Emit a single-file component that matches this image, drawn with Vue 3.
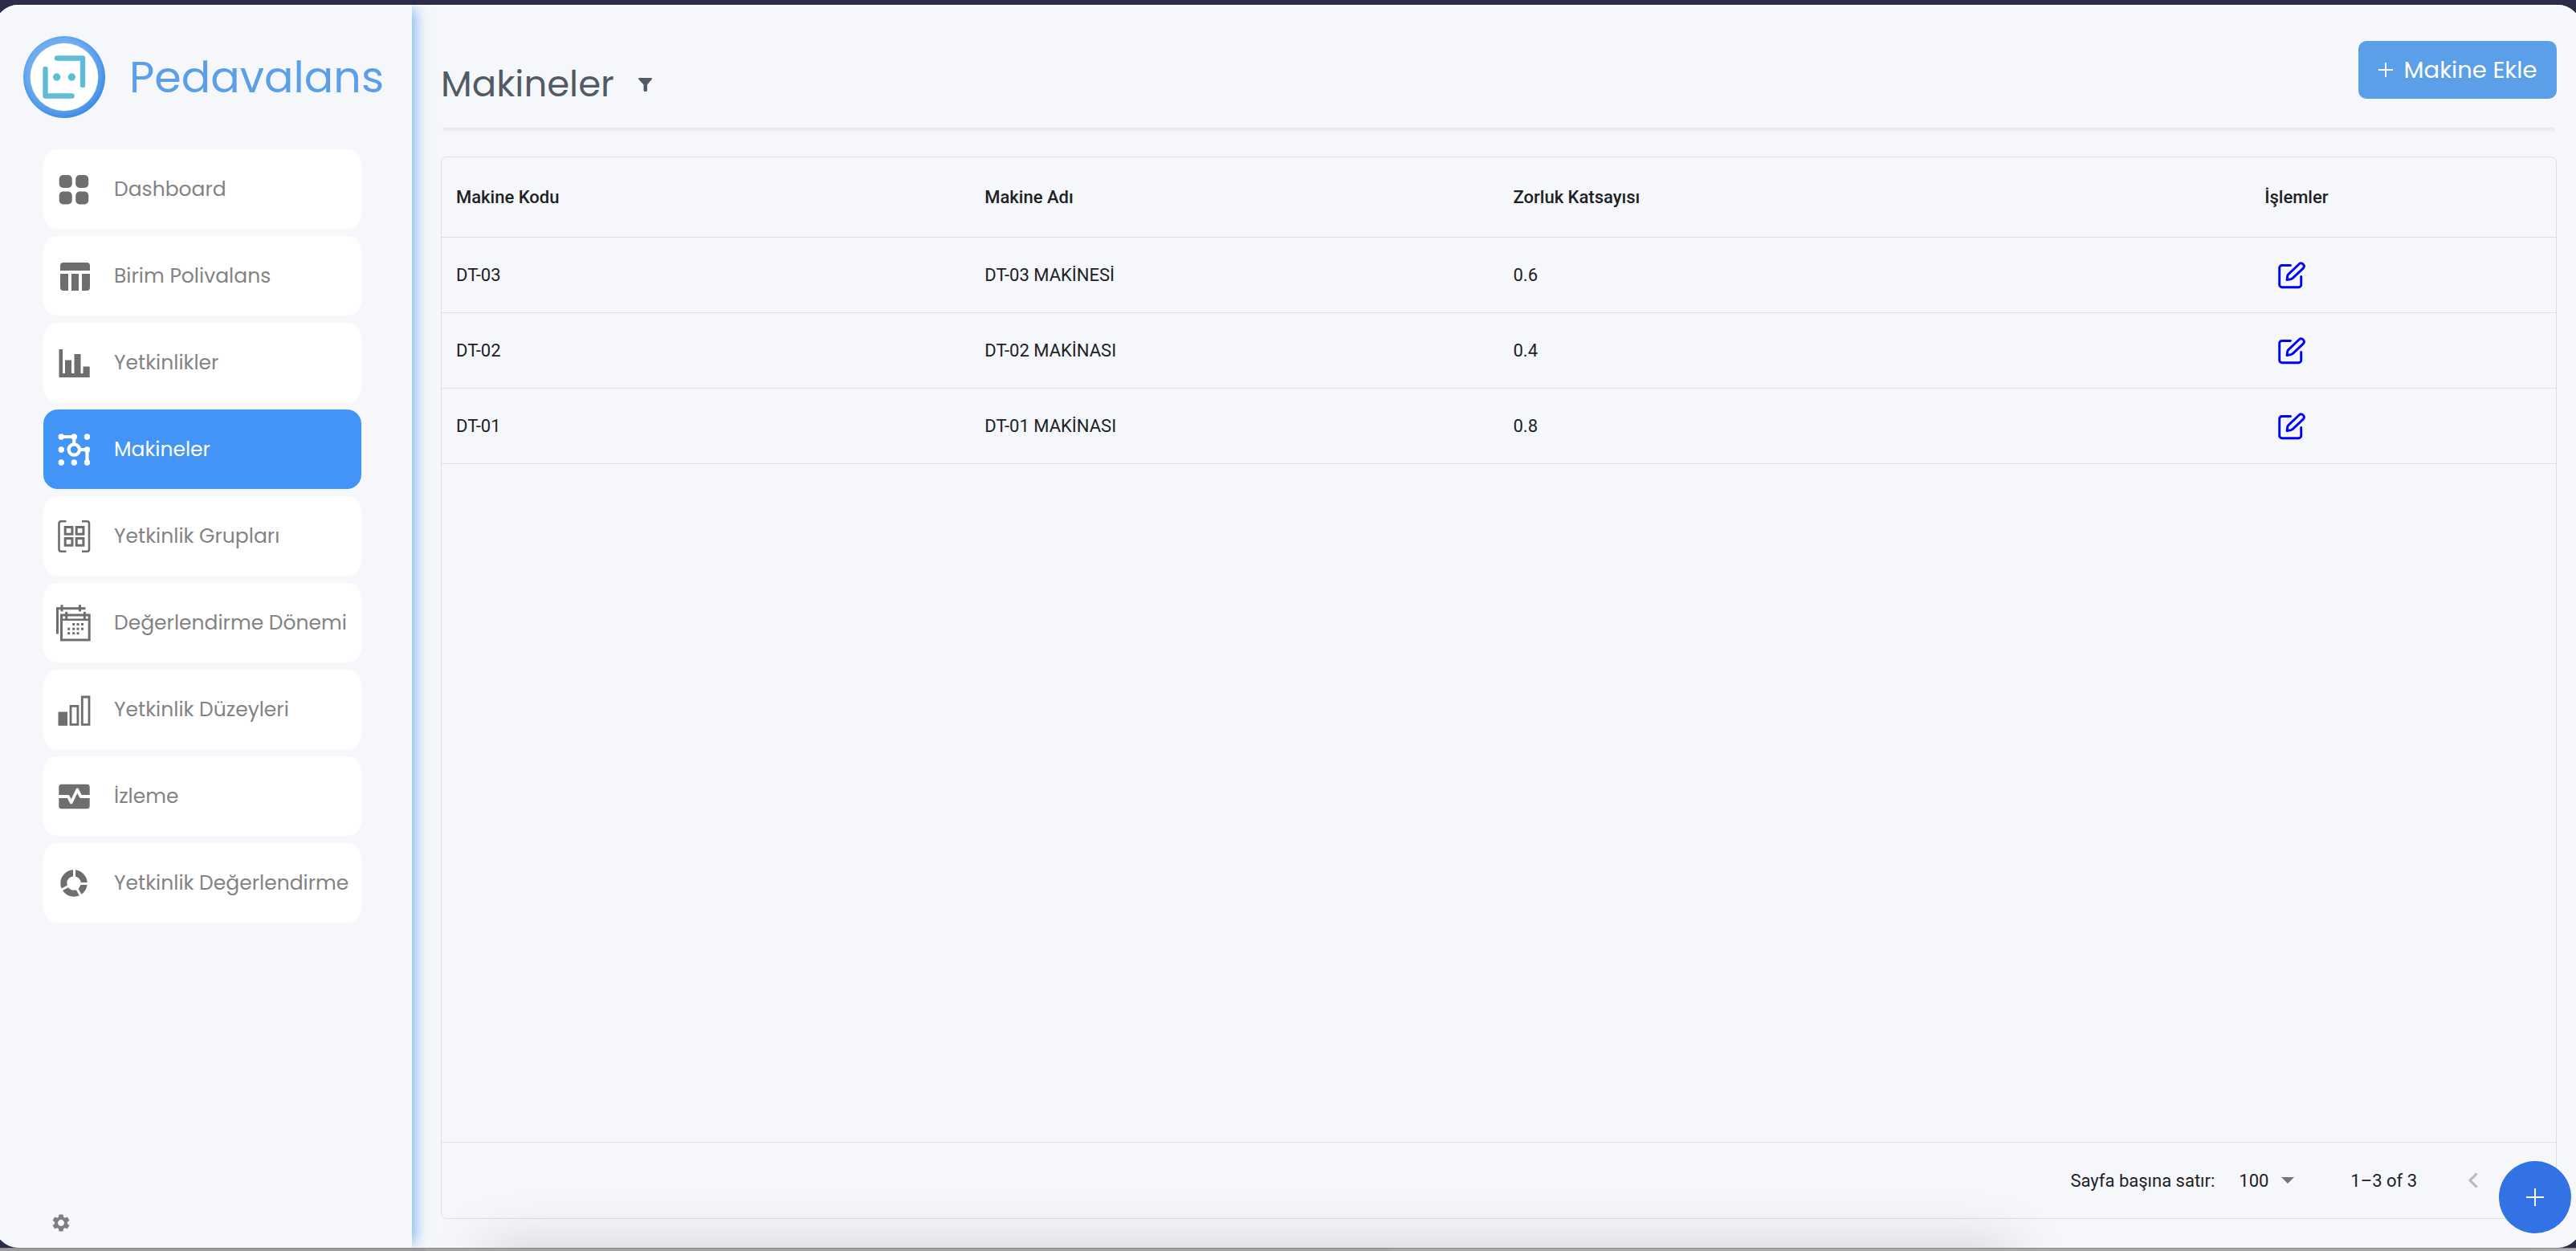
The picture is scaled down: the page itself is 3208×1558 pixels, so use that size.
<script setup>
import { ref } from 'vue'

const menu = [
  { id: 'dashboard', label: 'Dashboard' },
  { id: 'table', label: 'Birim Polivalans' },
  { id: 'chart', label: 'Yetkinlikler' },
  { id: 'machines', label: 'Makineler' },
  { id: 'groups', label: 'Yetkinlik Grupları' },
  { id: 'calendar', label: 'Değerlendirme Dönemi' },
  { id: 'levels', label: 'Yetkinlik Düzeyleri' },
  { id: 'monitor', label: 'İzleme' },
  { id: 'donut', label: 'Yetkinlik Değerlendirme' },
]
const active = ref('machines')

const rows = [
  { code: 'DT-03', name: 'DT-03 MAKİNESİ', factor: '0.6' },
  { code: 'DT-02', name: 'DT-02 MAKİNASI', factor: '0.4' },
  { code: 'DT-01', name: 'DT-01 MAKİNASI', factor: '0.8' },
]
const pageSize = ref(100)
</script>

<template>
  <div class="page">
    <div class="shell">
      <aside class="sidebar">
        <a class="brand" href="#">
          <svg class="logo" viewBox="0 0 102 102" aria-hidden="true">
            <defs>
              <radialGradient id="ring" cx="0.46" cy="0.44" r="0.56">
                <stop offset="0.7" stop-color="#70adef" />
                <stop offset="1" stop-color="#3f8de6" />
              </radialGradient>
            </defs>
            <circle cx="51" cy="51" r="51" fill="url(#ring)" />
            <circle cx="51" cy="51" r="42.3" fill="#fff" />
            <g fill="none" stroke="#60bad8" stroke-width="6.4" stroke-linejoin="round" stroke-linecap="round">
              <path d="M42 27.5H74V61" />
              <path d="M27.5 41V74.5H60.5" />
            </g>
            <g fill="#60bad8">
              <circle cx="41.7" cy="51" r="4.7" />
              <circle cx="60.3" cy="51" r="4.7" />
            </g>
          </svg>
          <span>Pedavalans</span>
        </a>

        <nav class="menu">
          <a
            v-for="item in menu"
            :key="item.id"
            href="#"
            class="item"
            :class="{ active: item.id === active }"
            @click.prevent="active = item.id"
          >
            <svg class="icon" viewBox="0 0 40 40" aria-hidden="true" fill="currentColor">
              <g v-if="item.id === 'dashboard'">
                <rect x="1.7" y="2" width="16" height="16" rx="5" />
                <rect x="22.2" y="2" width="16" height="16" rx="5" />
                <rect x="1.7" y="22.5" width="16" height="16" rx="5" />
                <rect x="22.2" y="22.5" width="16" height="16" rx="5" />
              </g>
              <g v-else-if="item.id === 'table'">
                <path d="M7 3h29a4 4 0 0 1 4 4v6H3V7a4 4 0 0 1 4-4z" />
                <path d="M3 17h10v21H7a4 4 0 0 1-4-4z" />
                <path d="M17 17h9v21h-9z" />
                <path d="M30 17h10v17a4 4 0 0 1-4 4h-6z" />
              </g>
              <g v-else-if="item.id === 'chart'">
                <path d="M1.5 3h4.5v30h3V16.5h8V33h3.5V9h8v24h3v-8.5h8.2V38H1.5z" />
              </g>
              <g v-else-if="item.id === 'machines'">
                <g fill="none" stroke="currentColor" stroke-width="4.2">
                  <circle cx="20.3" cy="20" r="6.7" />
                  <path d="M4.3 4h16v9" />
                  <path d="M27 20h9.5v16" />
                </g>
                <circle cx="4.3" cy="4" r="3.7" />
                <circle cx="20.3" cy="4" r="3.7" />
                <circle cx="36.5" cy="4" r="3.7" />
                <circle cx="4.3" cy="20" r="3.7" />
                <circle cx="36.5" cy="20" r="3.7" />
                <circle cx="4.3" cy="36" r="3.7" />
                <circle cx="20.3" cy="36" r="3.7" />
                <circle cx="36.5" cy="36" r="3.7" />
              </g>
              <g v-else-if="item.id === 'groups'" fill="none" stroke="currentColor" stroke-width="2.6">
                <path d="M10.5 1.3H4a2.5 2.5 0 0 0-2.5 2.5v32.5A2.5 2.5 0 0 0 4 38.7h6.5" />
                <path d="M30 1.3h6.5A2.5 2.5 0 0 1 39 3.8v32.5a2.5 2.5 0 0 1-2.5 2.5H30" />
                <g stroke-width="3">
                  <rect x="9.2" y="8.5" width="8.7" height="8.7" />
                  <rect x="23.2" y="8.5" width="8.7" height="8.7" />
                  <rect x="9.2" y="22.5" width="8.7" height="8.7" />
                  <rect x="23.2" y="22.5" width="8.7" height="8.7" />
                </g>
              </g>
              <g v-else-if="item.id === 'calendar'">
                <g fill="none" stroke="currentColor" stroke-width="3">
                  <path d="M-.5 33.5V1.8h35" />
                  <path d="M5-2.8v8.3M27.5-2.8v8.3M10.7 6v9M33.3 6v9" />
                  <rect x="4.5" y="10" width="34.7" height="31" />
                  <path d="M4.5 15.8h34.7" stroke-width="2.4" />
                </g>
                <path
                  d="M18.2 20h3v3h-3zM23.5 20h3v3h-3zM29 20h3v3h-3zM12.2 25.7h3v3h-3zM18.2 25.7h3v3h-3zM23.5 25.7h3v3h-3zM29 25.7h3v3h-3zM12.2 31.3h3v3h-3zM18.2 31.3h3v3h-3zM23.5 31.3h3v3h-3z"
                />
              </g>
              <g v-else-if="item.id === 'levels'">
                <path d="M.5 22.5h11.5v17.3H.5z" />
                <g fill="none" stroke="currentColor" stroke-width="2.8">
                  <path d="M16 15.3h8.9v23.1H16z" />
                  <path d="M30.3 4h8.7v34.4h-8.7z" />
                </g>
              </g>
              <g v-else-if="item.id === 'monitor'">
                <rect x="1.3" y="4.7" width="38.4" height="30.5" rx="3.5" />
                <path
                  d="M0 20h13l3.7 7.5 7.6-16 4.2 8.5H41"
                  fill="none"
                  stroke="#fff"
                  stroke-width="3.8"
                  stroke-linejoin="round"
                />
              </g>
              <g v-else>
                <circle cx="20" cy="20" r="12.7" fill="none" stroke="currentColor" stroke-width="8" />
                <path
                  d="M20.5 20V1M20 20.5h19M20 20l10 18M20 20L1 30"
                  fill="none"
                  stroke="#fff"
                  stroke-width="3"
                />
              </g>
            </svg>
            <span>{{ item.label }}</span>
          </a>
        </nav>

        <button class="settings" type="button" aria-label="Ayarlar">
          <svg viewBox="2 2 20 20" aria-hidden="true">
            <path
              fill="currentColor"
              d="M19.14 12.94c.04-.3.06-.61.06-.94 0-.32-.02-.64-.07-.94l2.03-1.58a.49.49 0 0 0 .12-.61l-1.92-3.32a.488.488 0 0 0-.59-.22l-2.39.96c-.5-.38-1.03-.7-1.62-.94l-.36-2.54a.484.484 0 0 0-.48-.41h-3.84c-.24 0-.43.17-.47.41l-.36 2.54c-.59.24-1.13.57-1.62.94l-2.39-.96c-.22-.08-.47 0-.59.22L2.74 8.87c-.12.21-.08.47.12.61l2.03 1.58c-.05.3-.09.63-.09.94s.02.64.07.94l-2.03 1.58a.49.49 0 0 0-.12.61l1.92 3.32c.12.22.37.29.59.22l2.39-.96c.5.38 1.03.7 1.62.94l.36 2.54c.05.24.24.41.48.41h3.84c.24 0 .44-.17.47-.41l.36-2.54c.59-.24 1.13-.56 1.62-.94l2.39.96c.22.08.47 0 .59-.22l1.92-3.32c.12-.22.07-.47-.12-.61l-2.01-1.58zM12 15.6c-1.98 0-3.6-1.62-3.6-3.6s1.62-3.6 3.6-3.6 3.6 1.62 3.6 3.6-1.62 3.6-3.6 3.6z"
            />
          </svg>
        </button>
      </aside>

      <main class="main">
        <header class="head">
          <div class="title">
            <h1>Makineler</h1>
            <button class="filter" type="button" aria-label="Filtrele">
              <svg viewBox="0 0 17 17" aria-hidden="true">
                <path fill="currentColor" d="M.5 0h16l.5 1.5L11 8.5V16l-1 1H7.5l-1-1V8.5L0 1.5z" />
              </svg>
            </button>
          </div>
          <button class="add" type="button">
            <svg viewBox="0 0 18 18" aria-hidden="true">
              <path d="M9 0v18M0 9h18" stroke="currentColor" stroke-width="2" />
            </svg>
            <span>Makine Ekle</span>
          </button>
        </header>
        <div class="rule"></div>

        <section class="grid">
          <table>
            <thead>
              <tr>
                <th>Makine Kodu</th>
                <th>Makine Adı</th>
                <th>Zorluk Katsayısı</th>
                <th class="actions">İşlemler</th>
              </tr>
            </thead>
            <tbody>
              <tr v-for="row in rows" :key="row.code">
                <td>{{ row.code }}</td>
                <td>{{ row.name }}</td>
                <td>{{ row.factor }}</td>
                <td class="actions">
                  <a class="edit" href="#" :aria-label="row.code + ' düzenle'">
                    <svg viewBox="0 0 34 34" aria-hidden="true">
                      <g
                        fill="none"
                        stroke="currentColor"
                        stroke-width="2.9"
                        stroke-linecap="round"
                        stroke-linejoin="round"
                      >
                        <path d="M15.5 4.5H4.7a3 3 0 0 0-3 3v21.2a3 3 0 0 0 3 3h21a3 3 0 0 0 3-3V18.5" />
                        <path d="M26.3 2.7a3.7 3.7 0 0 1 5.2 5.2L18 20.6l-1.8 1-5.2.9.8-5.2 1-1.7z" />
                      </g>
                    </svg>
                  </a>
                </td>
              </tr>
            </tbody>
          </table>

          <footer class="pager">
            <label for="page-size">Sayfa başına satır:</label>
            <div class="size">
              <select id="page-size" v-model="pageSize">
                <option :value="25">25</option>
                <option :value="50">50</option>
                <option :value="100">100</option>
              </select>
              <svg viewBox="0 0 16 8" aria-hidden="true"><path fill="#757679" d="M0 0h16L8 8z" /></svg>
            </div>
            <span class="range">1–3 of 3</span>
            <button type="button" disabled aria-label="Önceki sayfa">
              <svg viewBox="0 0 12 20" aria-hidden="true">
                <path d="M10.5 1.5L2 10l8.5 8.5" fill="none" stroke="currentColor" stroke-width="3" />
              </svg>
            </button>
            <button type="button" disabled aria-label="Sonraki sayfa">
              <svg viewBox="0 0 12 20" aria-hidden="true">
                <path d="M1.5 1.5L10 10l-8.5 8.5" fill="none" stroke="currentColor" stroke-width="3" />
              </svg>
            </button>
          </footer>
        </section>
      </main>

      <div class="glow"></div>
      <button class="fab" type="button" aria-label="Ekle">
        <svg viewBox="0 0 22 22" aria-hidden="true">
          <path d="M11 0v22M0 11h22" stroke="currentColor" stroke-width="2" />
        </svg>
      </button>
    </div>
    <div class="dock"></div>
  </div>
</template>

<style>
body {
  margin: 0;
}
</style>

<style scoped>
* {
  box-sizing: border-box;
}
svg {
  display: block;
  overflow: visible;
}
button {
  border: 0;
  background: none;
  padding: 0;
  font: inherit;
  color: inherit;
  cursor: pointer;
}
a {
  text-decoration: none;
}
.page {
  min-height: 100vh;
  display: flex;
  flex-direction: column;
  padding-top: 6px;
  overflow: hidden;
  background: #2b2d4a;
  font-family: Poppins, Inter, sans-serif;
}
.shell {
  position: relative;
  flex: 1;
  display: flex;
  margin: 0 -7px;
  padding: 0 7px;
  overflow: hidden;
  border-radius: 30px;
  background: #f6f7fb;
  box-shadow: inset 0 2px #fdfdff;
}
.sidebar {
  flex: none;
  width: 513px;
  display: flex;
  flex-direction: column;
  align-items: flex-start;
  padding: 39px 0 20px;
  box-shadow: 10px 0 16px -6px rgba(80, 160, 240, 0.75);
}
.brand {
  display: flex;
  align-items: center;
  gap: 30px;
  padding-left: 29px;
  color: #5a9fe8;
  font-size: 54px;
  line-height: 1;
}
.logo {
  width: 102px;
  height: 102px;
}
.menu {
  width: 396px;
  display: flex;
  flex-direction: column;
  gap: 9px;
  margin: 39px 0 0 54px;
}
.item {
  height: 99px;
  display: flex;
  align-items: center;
  gap: 30px;
  padding-left: 18px;
  border-radius: 18px;
  background: #fff;
  color: #838383;
  font-size: 25px;
  white-space: nowrap;
}
.icon {
  flex: none;
  width: 40px;
  height: 40px;
  color: #6e6e6e;
}
.item.active {
  background: #4394f7;
  color: #fff;
}
.active .icon {
  color: #fff;
}
.settings {
  margin: auto 0 0 65px;
  color: #7f807f;
}
.settings svg {
  width: 22px;
  height: 22px;
}
.main {
  flex: 1;
  min-width: 0;
  display: flex;
  flex-direction: column;
  padding: 45px 24px 36px 36px;
}
.head {
  height: 108px;
  display: flex;
  justify-content: space-between;
}
.title {
  display: flex;
  align-items: center;
  gap: 30px;
  color: #525b65;
}
h1 {
  margin: 0;
  font-size: 45px;
  font-weight: 400;
  line-height: 60px;
}
.filter svg {
  width: 17px;
  height: 17px;
}
.add {
  width: 247px;
  height: 72px;
  display: flex;
  align-items: center;
  justify-content: center;
  gap: 14px;
  border-radius: 10px;
  background: #5a9fe8;
  color: #fff;
  font-size: 29px;
}
.add svg {
  width: 18px;
  height: 18px;
}
.rule {
  height: 6px;
  margin: 0 2px 30px;
  border-radius: 3px;
  background: linear-gradient(#e7e8ec, #eeeff3 50%, #f6f7fb);
}
.grid {
  flex: 1;
  display: flex;
  flex-direction: column;
  justify-content: space-between;
  border: 1px solid #dddee1;
  border-radius: 7px;
  color: #202124;
  font-family: Roboto, sans-serif;
  font-size: 22px;
}
table {
  width: 100%;
  table-layout: fixed;
  border-collapse: separate;
  border-spacing: 0;
}
th,
td {
  height: 94px;
  padding: 0 18px;
  border-bottom: 1px solid #dddee1;
  text-align: left;
}
th {
  height: 100px;
  font-weight: 500;
}
.actions {
  text-align: center;
}
th.actions {
  padding-left: 30px;
}
.edit {
  display: inline-block;
  vertical-align: middle;
  color: #0000ff;
}
.edit svg {
  width: 34px;
  height: 34px;
}
.pager {
  height: 95px;
  display: flex;
  align-items: center;
  justify-content: flex-end;
  padding-right: 31px;
  border-top: 1px solid #dddee1;
}
.size {
  display: flex;
  align-items: center;
  margin-left: 30px;
}
.size select {
  appearance: none;
  width: 70px;
  margin-right: -17px;
  padding: 0;
  border: 0;
  background: none;
  color: inherit;
  font: inherit;
}
.size svg {
  width: 16px;
  height: 8px;
  pointer-events: none;
}
.range {
  margin: 0 46px 0 70px;
}
.pager button {
  width: 48px;
  height: 48px;
  display: grid;
  place-items: center;
  color: #b8b9bd;
}
.pager button svg {
  width: 12px;
  height: 20px;
}
.glow {
  position: absolute;
  top: 100%;
  left: 19%;
  right: 22%;
  height: 60px;
  box-shadow: 0 0 70px rgba(0, 0, 0, 0.17);
  pointer-events: none;
}
.fab {
  position: absolute;
  right: 13px;
  bottom: 18px;
  width: 90px;
  height: 90px;
  display: grid;
  place-items: center;
  border-radius: 50%;
  background: #3372e4;
  color: #fff;
}
.fab svg {
  width: 22px;
  height: 22px;
}
.dock {
  height: 4px;
  border-top: 1px solid #88888c;
  background: linear-gradient(90deg, #9c9b9a 0 530px, #a5a3a2 530px 54%, #a8a8a8 54% 98%, #b4b4b4);
}
</style>
